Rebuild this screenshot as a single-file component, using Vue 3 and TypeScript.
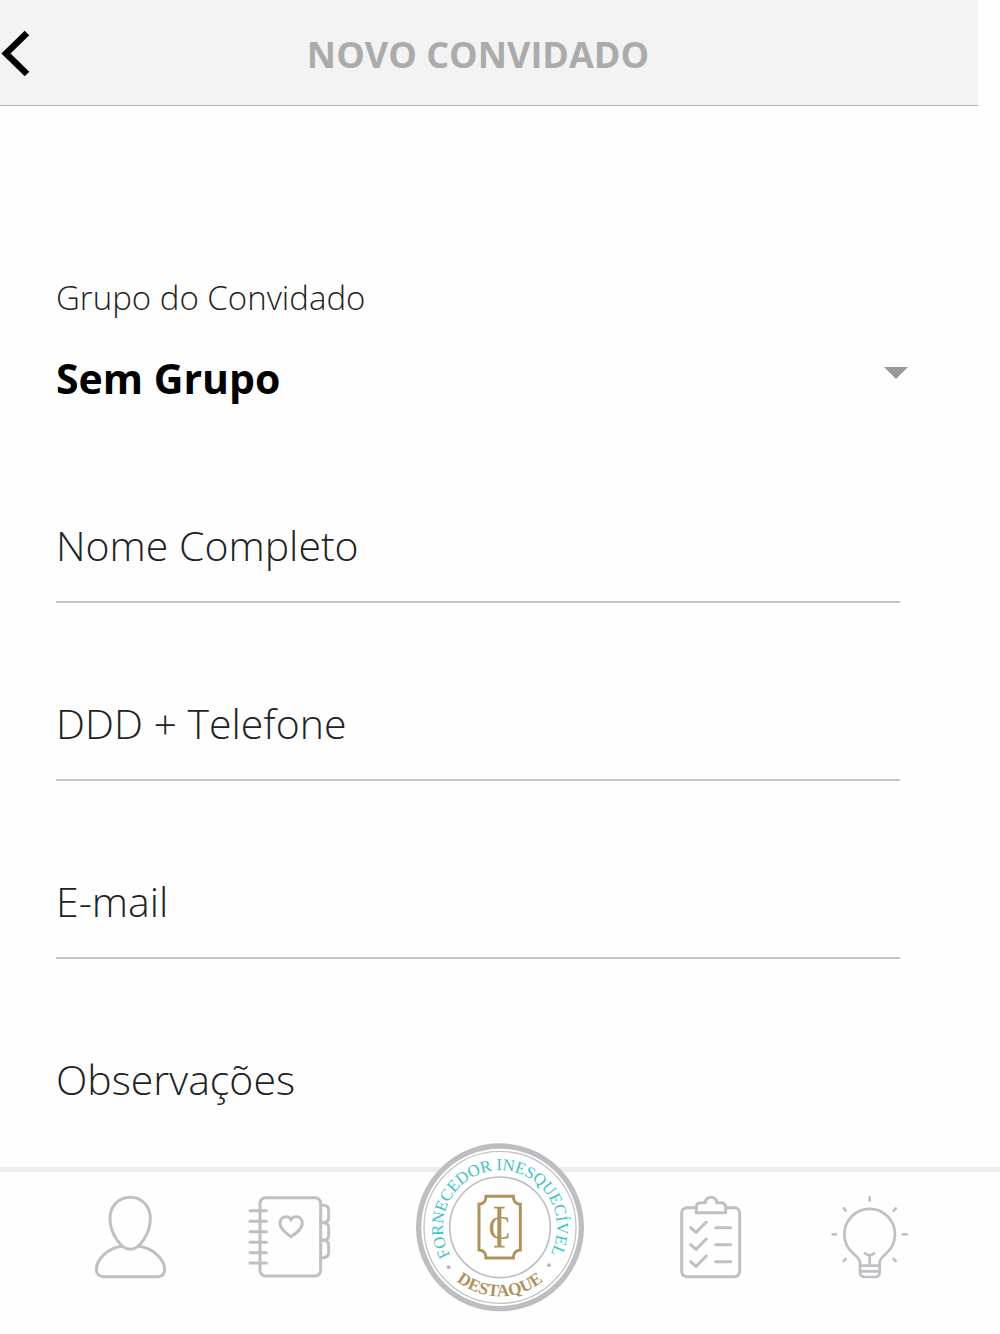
<script setup lang="ts">
import { reactive, ref } from 'vue'

interface Field {
  key: 'nome' | 'telefone' | 'email'
  type: string
  caption: string
}

const grupo = ref('Sem Grupo')
const grupos: string[] = ['Sem Grupo']

const fields: Field[] = [
  { key: 'nome', type: 'text', caption: 'Nome Completo' },
  { key: 'telefone', type: 'tel', caption: 'DDD + Telefone' },
  { key: 'email', type: 'email', caption: 'E-mail' },
]

const values = reactive<Record<Field['key'], string>>({
  nome: '',
  telefone: '',
  email: '',
})
const observacoes = ref('')

const spineRings: number[] = [92, 124, 155, 187, 218, 249]
const taskRows: number[] = [143, 194, 245]
</script>

<template>
  <div class="screen">
    <div class="view">
      <header class="bar">
        <button class="back" type="button" aria-label="Voltar">
          <svg viewBox="0 0 32 48" width="32" height="48">
            <path d="M27 4L6 24.500L27 45" fill="none" stroke="#000" stroke-width="6.500" />
          </svg>
        </button>
        <h1 class="title">NOVO CONVIDADO</h1>
      </header>

      <form class="form" @submit.prevent>
        <label class="group-label" for="grupo">Grupo do Convidado</label>
        <div class="picker">
          <select id="grupo" v-model="grupo" class="select">
            <option v-for="g in grupos" :key="g" :value="g">{{ g }}</option>
          </select>
          <svg class="arrow" viewBox="0 0 24 12" width="24" height="12" aria-hidden="true">
            <path d="M0 0H24L12 12Z" fill="#999" />
          </svg>
        </div>
        <div class="fields">
          <input
            v-for="f in fields"
            :key="f.key"
            v-model="values[f.key]"
            class="input"
            :type="f.type"
            :name="f.key"
            :placeholder="f.caption"
            :aria-label="f.caption"
          />
          <textarea
            v-model="observacoes"
            class="input notes"
            name="observacoes"
            placeholder="Observações"
            aria-label="Observações"
          ></textarea>
        </div>
      </form>
    </div>

    <nav class="tabs">
      <a class="tab" href="#perfil" aria-label="Perfil">
        <svg class="icon" viewBox="0 0 300 330" width="100" height="110">
          <path d="M151 52C114 52 90 80 90 116C90 158 122 208 151 208C180 208 211 158 211 116C211 80 187 52 151 52Z" />
          <path d="M126 199C85 203 49 238 49 268C49 282 58 290 70 290H234C246 290 254 282 254 268C254 238 217 203 176 199" />
        </svg>
      </a>
      <a class="tab" href="#agenda" aria-label="Agenda">
        <svg class="icon" viewBox="0 0 330 330" width="110" height="110">
          <rect x="75" y="53" width="182" height="235" rx="17" />
          <path v-for="y in spineRings" :key="y" :d="`M45 ${y}H94`" />
          <path d="M257 76H265Q281 76 281 92V112Q281 128 265 128H257M265 128Q281 128 281 144V165Q281 181 265 181H257M265 181Q281 181 281 197V217Q281 233 265 233H257" />
          <path d="M168 170C150 158 135 146 135 129C135 117 144 110 153 110C161 110 167 115 168 121C169 115 175 110 184 110C194 110 202 118 202 129C202 146 186 158 168 170Z" />
        </svg>
      </a>
      <a class="tab" href="#destaque">
        <svg class="seal" viewBox="0 0 570 555" width="190" height="185">
          <defs>
            <path id="arc-top" d="M285 448A171 171 0 0 1 285 106A171 171 0 0 1 285 448" />
            <path id="arc-bottom" d="M78 277A207 207 0 0 0 492 277" />
          </defs>
          <circle cx="285" cy="277" r="244" fill="#fff" stroke="#bdbec2" stroke-width="16" />
          <circle cx="285" cy="277" r="228" fill="none" stroke="#c4c5c8" stroke-width="4" />
          <circle cx="285" cy="277" r="151" fill="none" stroke="#bdbec2" stroke-width="5" />
          <text class="seal-top"><textPath href="#arc-top" startOffset="49.700%">FORNECEDOR INESQUECÍVEL</textPath></text>
          <text class="seal-bottom"><textPath href="#arc-bottom" startOffset="50%">DESTAQUE</textPath></text>
          <circle cx="131" cy="397" r="6" fill="#b9babd" />
          <circle cx="432" cy="391" r="6" fill="#b9babd" />
          <path
            d="M243 184H325C325 198 333 208 346 208V345C333 345 325 355 325 369H243C243 355 235 345 222 345V208C235 208 243 198 243 184Z"
            fill="none"
            stroke="#b0925e"
            stroke-width="9"
          />
          <path d="M283 217V336" stroke="#b0925e" stroke-width="12" />
          <path d="M267 218H299M267 335H299" stroke="#b0925e" stroke-width="5" />
          <text class="seal-mark" x="283" y="312">C</text>
        </svg>
      </a>
      <a class="tab" href="#tarefas" aria-label="Tarefas">
        <svg class="icon" viewBox="0 0 270 330" width="90" height="110">
          <rect x="50" y="83" width="174" height="207" rx="16" />
          <path d="M94 98V82Q94 68 108 68H121C122 58 129 52 138 52C147 52 154 58 155 68H168Q182 68 182 82V98Z" fill="#fff" />
          <g v-for="y in taskRows" :key="y">
            <path :d="`M77 ${y}L93 ${y + 14}L124 ${y - 17}`" />
            <path :d="`M152 ${y}H197`" />
          </g>
        </svg>
      </a>
      <a class="tab" href="#ideias" aria-label="Ideias">
        <svg class="icon thin" viewBox="0 0 300 330" width="100" height="110">
          <path d="M120 257V248C120 236 108 228 99 220A76 76 0 1 1 199 220C190 228 179 236 179 248V257" />
          <path d="M120 257H179V276Q179 291 164 291H135Q120 291 120 276ZM120 274H179" />
          <path d="M149 257V226M135 220Q142 226 149 226Q156 226 163 220" />
          <path d="M149 52V62M38 163H48M249 163H260M71 85L77 92M227 85L221 92M71 243L77 237M227 243L221 237" />
        </svg>
      </a>
    </nav>
  </div>
</template>

<style>
body {
  margin: 0;
  background: #fefefe;
}
</style>

<style scoped>
.screen {
  display: flex;
  flex-direction: column;
  height: 100vh;
  font-family: 'Open Sans', 'Noto Sans', sans-serif;
  color: #000;
}

.view {
  flex: 1;
  min-height: 0;
  margin-right: 22px;
  overflow: hidden;
}

.bar {
  display: grid;
  grid-template-columns: 32px 1fr 54px;
  align-items: center;
  height: 105px;
  background: #f3f3f3;
  border-bottom: 1px solid #b4b4b4;
}

.back {
  display: block;
  padding: 0;
  border: 0;
  background: none;
  cursor: pointer;
}

.back svg {
  display: block;
}

.title {
  margin: 0;
  padding-top: 4px;
  font-size: 36px;
  line-height: 48px;
  font-weight: 700;
  text-align: center;
  color: #ababab;
}

.form {
  display: flex;
  flex-direction: column;
  padding: 168px 70px 0 56px;
}

.group-label {
  font-size: 33px;
  line-height: 48px;
  font-weight: 300;
  color: #222;
}

.picker {
  position: relative;
  margin-top: 24px;
}

.select {
  display: block;
  width: 100%;
  height: 64px;
  padding: 0;
  border: 0;
  appearance: none;
  background: none;
  font: inherit;
  font-size: 41px;
  font-weight: 700;
  color: #000;
}

.arrow {
  position: absolute;
  right: 0;
  top: 21px;
  pointer-events: none;
}

.fields {
  display: flex;
  flex-direction: column;
  gap: 80px;
  margin: 95px 8px 0 0;
}

.input {
  box-sizing: border-box;
  width: 100%;
  height: 98px;
  padding: 0 0 16px;
  border: 0;
  border-bottom: 2px solid #c4c4c9;
  border-radius: 0;
  outline: 0;
  background: none;
  font: inherit;
  font-size: 41px;
  font-weight: 300;
  color: #222;
}

.notes {
  display: block;
  height: 240px;
  line-height: 80px;
  resize: none;
}

.input::placeholder {
  color: #222;
  opacity: 1;
}

.tabs {
  position: relative;
  display: grid;
  grid-template-columns: 8fr 8fr 13fr 8fr 8fr;
  align-items: start;
  height: 154px;
  padding: 8px 5% 0;
  border-top: 5px solid #eee;
  background: #fefefe;
}

.tab {
  display: flex;
  justify-content: center;
}

.icon {
  fill: none;
  stroke: #bfc0c3;
  stroke-width: 9;
  stroke-linecap: round;
  stroke-linejoin: round;
}

.thin {
  stroke-width: 8;
}

.seal {
  margin-top: -45px;
}

.seal-top,
.seal-bottom,
.seal-mark {
  font-family: 'Liberation Serif', serif;
  text-anchor: middle;
}

.seal-top {
  font-size: 50px;
  fill: #3cc3c8;
}

.seal-bottom {
  font-size: 52px;
  font-weight: 700;
  fill: #b0925e;
}

.seal-mark {
  font-size: 98px;
  fill: #b0925e;
}
</style>
